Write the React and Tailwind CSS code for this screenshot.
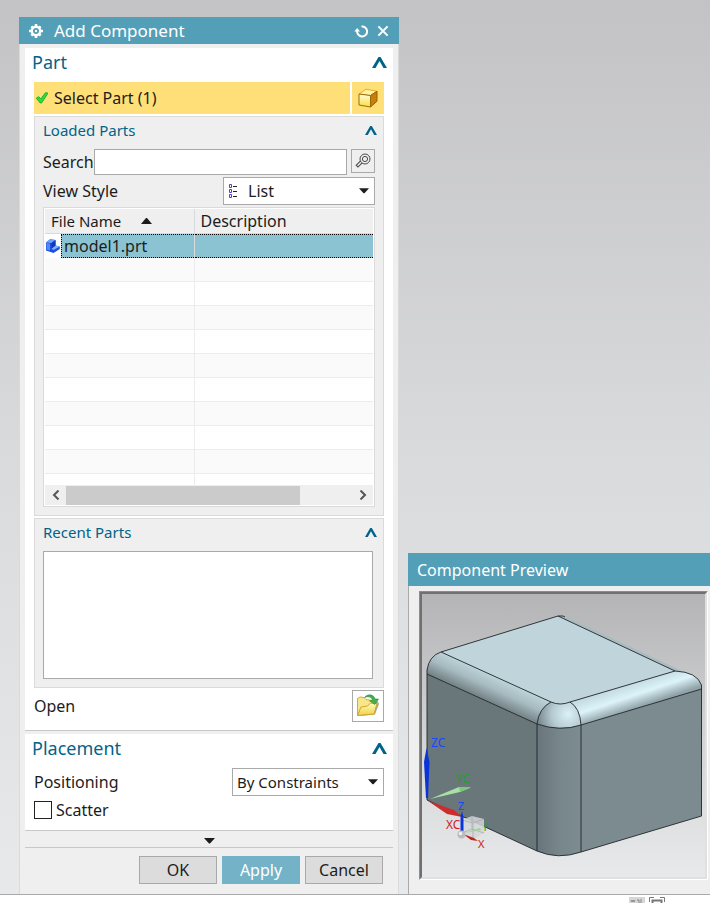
import { useState } from "react";

function Caret({ className }) {
  return (
    <svg className={className} viewBox="0 0 15 11" aria-hidden="true">
      <path d="M0 11 6.500 0h2L15 11H11.500L7.500 4 3.500 11Z" fill="#006487" />
    </svg>
  );
}

function DownArrow({ className }) {
  return (
    <svg className={className} viewBox="0 0 11 6" aria-hidden="true">
      <path d="M0 0h11L6 5.5H5Z" fill="#1c1c1c" />
    </svg>
  );
}

function GearIcon() {
  return (
    <svg className="size-4" viewBox="0 0 16 16" aria-hidden="true">
      <g stroke="#fff" strokeWidth="2.600">
        <path d="M8 1v14M1 8h14M3.400 3.400l9.200 9.200M12.600 3.400l-9.200 9.200" />
      </g>
      <circle cx="8" cy="8" r="4.200" fill="#549fb8" stroke="#fff" strokeWidth="2.400" />
      <circle cx="8" cy="8" r="1.200" fill="#fff" />
    </svg>
  );
}

function CheckIcon() {
  return (
    <svg className="h-3 w-3" viewBox="0 0 12 12" aria-hidden="true">
      <path d="M.3 6.200 2.600 4.600 4.800 6.800 9.600 .6 12 1.200 5.600 11H4.200Z" fill="#2bdc3b" stroke="#12a622" strokeWidth=".8" />
    </svg>
  );
}

function BlockIcon() {
  return (
    <svg className="size-5" viewBox="0 0 20 20" aria-hidden="true">
      <defs>
        <linearGradient id="blockFront" x1="0" y1="0" x2="0" y2="1">
          <stop offset="0" stopColor="#fffde0" />
          <stop offset="1" stopColor="#fbdc3a" />
        </linearGradient>
      </defs>
      <path d="M1 6 8 1.2l11 2L12.500 7.500Z" fill="#fff3a8" stroke="#e8b020" />
      <path d="M12.500 7.500 19 3.200v10L12.500 19Z" fill="#c77f08" stroke="#9a5c05" />
      <path d="M1 6l11.500 1.500V19L1 17Z" fill="url(#blockFront)" stroke="#9a6a0a" />
    </svg>
  );
}

function SearchIcon() {
  return (
    <svg className="size-4" viewBox="0 0 16 16" fill="none" stroke="#4a4a4a" aria-hidden="true">
      <circle cx="10" cy="6" r="5" />
      <circle cx="10" cy="6" r="2.600" />
      <path d="M6.200 9 1.700 13.500" strokeWidth="3.600" />
      <path d="M6 9.200 2.500 12.700" stroke="#efefef" strokeWidth="1.400" />
    </svg>
  );
}

function ListIcon() {
  return (
    <svg className="h-4 w-2" viewBox="0 0 8 16" fill="none" aria-hidden="true">
      <path d="M.5 1.500h2v3h-2zM.5 6.500h2v3h-2zM.5 11.500h2v3h-2z" stroke="#4a3fd0" />
      <path d="M4 3.500h4M4 8.500h4M4 13.500h4" stroke="#222" />
    </svg>
  );
}

function PartIcon() {
  return (
    <svg className="h-4 w-4 shrink-0" viewBox="0 0 16 16" aria-hidden="true">
      <path d="M1 4.500 5 1.200 10.500 2V7.500L14.800 8.500V11L8.500 15 1 12.500Z" fill="#1f4fe0" />
      <path d="M1 4.500 5 1.200 10.500 2 6.500 5Z" fill="#6fa2ff" />
      <path d="M1.500 5 5 5.800V12.500L1.500 11.500Z" fill="#4f8bff" />
      <path d="M6.500 10.500 10.500 7.500l4.300 1L8.500 12Z" fill="#7fb0ff" />
      <path d="M6.500 5 10.500 2V7.500L6.500 10.500Z" fill="#1238b8" />
    </svg>
  );
}

function FolderIcon() {
  return (
    <svg className="size-6" viewBox="0 0 24 24" aria-hidden="true">
      <defs>
        <linearGradient id="folderFront" x1="0" y1="0" x2="0" y2="1">
          <stop offset="0" stopColor="#fffbb8" />
          <stop offset="1" stopColor="#f0d04a" />
        </linearGradient>
      </defs>
      <path d="M4 22 19 20.500 23 10 21.500 7Z" fill="#a9a99c" />
      <path d="M1.500 21.500V4.500L4 3 8 3.500l2 2 9 1.500 1.500 3-3 9Z" fill="#f8e68c" stroke="#d3ad2e" />
      <path d="M1.500 21.500 5 13 11.500 12l3-3 6.500.5L18 20Z" fill="url(#folderFront)" stroke="#cfa62a" />
      <path d="M8.500 3.500C11 0 17.500-.5 19 5H22.500L18.800 10.500 13.500 6.800 16.500 6.200C15.500 2.300 11.500 2.200 8.500 3.500Z" fill="#45b04b" stroke="#2c8e3a" strokeWidth=".6" />
    </svg>
  );
}

function SectionHeading({ children }) {
  return (
    <div className="flex h-7 items-center justify-between pr-[6px] pl-[7px]">
      <h2 className="text-[18px] leading-7 text-[#006487]">{children}</h2>
      <button type="button" aria-label={`Collapse ${children}`}>
        <Caret className="h-[11px] w-[15px]" />
      </button>
    </div>
  );
}

function GroupHeading({ children }) {
  return (
    <div className="flex h-[26px] items-center justify-between pr-[6px] pl-2">
      <h3 className="text-[15px] text-[#006487]">{children}</h3>
      <button type="button" aria-label={`Collapse ${children}`}>
        <Caret className="h-[9px] w-3" />
      </button>
    </div>
  );
}

const emptyRows = [0, 1, 2, 3, 4, 5, 6, 7, 8, 9];

function PartsTable() {
  return (
    <div className="mt-[2px] border border-[#dadada] bg-white p-px">
      <div className="h-[276px] overflow-hidden">
        <table className="w-full table-fixed border-collapse text-left">
          <thead>
            <tr className="h-6 bg-[#efefef]">
              <th className="w-[149px] border-r border-b border-[#dadada] p-0 pl-[6px] text-[15px] font-normal">
                <span className="flex items-center gap-5">
                  File Name
                  <svg className="h-[6px] w-[11px]" viewBox="0 0 11 6" aria-hidden="true">
                    <path d="M0 6h11L6 0H5Z" fill="#1c1c1c" />
                  </svg>
                </span>
              </th>
              <th className="border-b border-[#dadada] p-0 pl-[6px] font-normal">Description</th>
            </tr>
          </thead>
          <tbody>
            <tr className="h-6">
              <td className="border-r border-[#dadada] p-0">
                <span className="flex h-6 items-center">
                  <PartIcon />
                  <span className="flex h-6 flex-1 items-center border-y border-l border-dotted border-black bg-[#8bc3d2] pl-[2px]">
                    model1.prt
                  </span>
                </span>
              </td>
              <td className="p-0">
                <span className="block h-6 border-y border-dotted border-black bg-[#8bc3d2]" />
              </td>
            </tr>
            {emptyRows.map((row) => (
              <tr key={row} className="h-6 odd:bg-white even:bg-[#fafafa]">
                <td className="border-r border-b border-[#ececec] p-0" />
                <td className="border-b border-[#ececec] p-0" />
              </tr>
            ))}
          </tbody>
        </table>
      </div>
      <div className="flex h-5 items-center bg-[#efefef]">
        <button type="button" aria-label="Scroll left" className="flex w-[21px] justify-center">
          <svg className="h-[10px] w-2" viewBox="0 0 8 10" fill="none" aria-hidden="true">
            <path d="M6.500 .5 2 5l4.500 4.500" stroke="#555" strokeWidth="2" />
          </svg>
        </button>
        <div className="h-[19px] flex-1">
          <div className="h-full w-9/11 bg-[#cbcbcb]" />
        </div>
        <button type="button" aria-label="Scroll right" className="flex w-[21px] justify-center">
          <svg className="h-[10px] w-2" viewBox="0 0 8 10" fill="none" aria-hidden="true">
            <path d="M1.500 .5 6 5 1.500 9.500" stroke="#555" strokeWidth="2" />
          </svg>
        </button>
      </div>
    </div>
  );
}

function AddComponentDialog() {
  const [search, setSearch] = useState("");
  const [scatter, setScatter] = useState(false);
  return (
    <section className="w-[380px] shrink-0 border-x border-[#dadada] bg-[#efefef]">
      <header className="-mx-px flex h-[27px] items-center bg-[#549fb8] pr-[10px] pl-[9px] text-white">
        <GearIcon />
        <h1 className="ml-[10px] flex-1 text-[17px]">Add Component</h1>
        <button type="button" aria-label="Reset" className="mr-[9px]">
          <svg className="h-[14px] w-[14px]" viewBox="0 0 14 14" fill="none" aria-hidden="true">
            <path d="M7.500 2.500A5 5 0 1 1 3.200 6.500" stroke="#fff" strokeWidth="2" />
            <path d="M.3 7.500 3.200 4 6 7.500Z" fill="#fff" />
          </svg>
        </button>
        <button type="button" aria-label="Close">
          <svg className="h-3 w-3" viewBox="0 0 13 13" aria-hidden="true">
            <path d="M1.500 1.500l10 10M11.500 1.500l-10 10" stroke="#fff" strokeWidth="2.200" />
          </svg>
        </button>
      </header>

      <div className="px-[5px] pt-1">
        <div className="border-b border-[#c8c8c8] bg-white pb-2">
          <SectionHeading>Part</SectionHeading>
          <div className="mt-[6px] px-[9px]">
            <div className="flex h-8 gap-[2px]">
              <button type="button" className="flex flex-1 items-center gap-[6px] bg-[#ffe078] pl-[2px]">
                <CheckIcon />
                Select Part (1)
              </button>
              <button type="button" aria-label="Pick part" className="flex w-8 items-center justify-center bg-[#ffe078]">
                <BlockIcon />
              </button>
            </div>

            <div className="mt-[2px] border border-[#dadada] bg-[#efefef] pb-2">
              <GroupHeading>Loaded Parts</GroupHeading>
              <div className="mt-[6px] px-2">
                <div className="flex items-start">
                  <label htmlFor="search" className="w-[51px] leading-[26px]">Search</label>
                  <input
                    id="search"
                    value={search}
                    onChange={(e) => setSearch(e.target.value)}
                    className="h-[26px] min-w-0 flex-1 border border-[#a9a9a9] bg-white px-1 outline-none"
                  />
                  <button type="button" aria-label="Find" className="ml-1 flex size-6 items-center justify-center border border-[#a9a9a9]">
                    <SearchIcon />
                  </button>
                </div>
                <div className="mt-[2px] flex items-center justify-between">
                  <label htmlFor="view-style">View Style</label>
                  <div className="relative w-[152px]">
                    <select id="view-style" className="h-7 w-full appearance-none border border-[#a9a9a9] bg-white pl-6 outline-none">
                      <option>List</option>
                    </select>
                    <span className="pointer-events-none absolute inset-y-0 left-[6px] flex items-center">
                      <ListIcon />
                    </span>
                    <span className="pointer-events-none absolute inset-y-0 right-[6px] flex items-center">
                      <DownArrow className="h-[6px] w-[10px]" />
                    </span>
                  </div>
                </div>
                <PartsTable />
              </div>
            </div>

            <div className="mt-[2px] border border-[#dadada] bg-[#efefef] pr-[10px] pb-2">
              <div className="-mr-[10px]">
                <GroupHeading>Recent Parts</GroupHeading>
              </div>
              <div className="mt-[6px] ml-2 h-32 border border-[#a9a9a9] bg-white" />
            </div>

            <div className="mt-[2px] flex items-center justify-between">
              <label htmlFor="open-part">Open</label>
              <button id="open-part" type="button" className="flex size-8 items-center justify-center border border-[#a9a9a9] bg-white">
                <FolderIcon />
              </button>
            </div>
          </div>
        </div>

        <div className="mt-[3px] border-b border-[#c8c8c8] bg-white pb-[11px]">
          <SectionHeading>Placement</SectionHeading>
          <div className="mt-[6px] px-[9px]">
            <div className="flex items-center justify-between">
              <label htmlFor="positioning">Positioning</label>
              <div className="relative w-[152px]">
                <select id="positioning" className="h-7 w-full appearance-none border border-[#a9a9a9] bg-white pl-1 text-[15px] outline-none">
                  <option>By Constraints</option>
                </select>
                <span className="pointer-events-none absolute inset-y-0 right-[6px] flex items-center">
                  <DownArrow className="h-[6px] w-[10px]" />
                </span>
              </div>
            </div>
            <label className="mt-[5px] flex h-[18px] items-center gap-1">
              <input
                type="checkbox"
                checked={scatter}
                onChange={(e) => setScatter(e.target.checked)}
                className="size-[18px] appearance-none border border-[#222] bg-white checked:bg-[#549fb8]"
              />
              Scatter
            </label>
          </div>
        </div>

        <button type="button" aria-label="Show more" className="flex h-[17px] w-full items-center justify-center border-b border-[#c8c8c8] pt-[3px]">
          <DownArrow className="h-[6px] w-[11px]" />
        </button>
        <div className="flex justify-end gap-[5px] pt-2 pr-[10px] pb-[10px]">
          <button type="button" className="h-7 w-[78px] border border-[#a9a9a9] bg-[#dcdcdc]">OK</button>
          <button type="button" className="h-7 w-[78px] bg-[#74b3c7] text-white">Apply</button>
          <button type="button" className="h-7 w-[78px] border border-[#a9a9a9] bg-[#dcdcdc]">Cancel</button>
        </div>
      </div>
    </section>
  );
}

function PreviewModel() {
  return (
    <svg className="block w-full" viewBox="422 594 283 283" role="img" aria-label="Rounded block">
      <defs>
        <linearGradient id="leftEdge" gradientUnits="userSpaceOnUse" x1="496" y1="676" x2="484" y2="702">
          <stop offset="0" stopColor="#bfd5db" />
          <stop offset=".45" stopColor="#a6babf" />
          <stop offset="1" stopColor="#6b787b" />
        </linearGradient>
        <linearGradient id="rightEdge" gradientUnits="userSpaceOnUse" x1="622" y1="686" x2="630" y2="710">
          <stop offset="0" stopColor="#c3dae0" />
          <stop offset=".5" stopColor="#dcf3f9" />
          <stop offset="1" stopColor="#8fa2a7" />
        </linearGradient>
        <radialGradient id="cornerBall" gradientUnits="userSpaceOnUse" cx="568" cy="714" r="32">
          <stop offset="0" stopColor="#daf1f7" />
          <stop offset=".5" stopColor="#b6cbd1" />
          <stop offset="1" stopColor="#72828a" />
        </radialGradient>
        <linearGradient id="cornerSide" x1="0" x2="1">
          <stop offset="0" stopColor="#68757a" />
          <stop offset=".5" stopColor="#77868b" />
          <stop offset="1" stopColor="#7d8c91" />
        </linearGradient>
      </defs>
      <path d="M558 616 565 616 682 671 675 671Z" fill="#a9bcc1" />
      <path d="M558 616 675 671 570 702Q560 706 551 702L441 652Z" fill="#bfd5db" />
      <path d="M441 652 551 702Q539 708 537 724L427 674V670Q429 656 441 652Z" fill="url(#leftEdge)" />
      <path d="M570 702 675 671Q697 672 701.500 685V689L581 725Q580 710 570 702Z" fill="url(#rightEdge)" />
      <path d="M551 702Q560 706 570 702 580 710 581 725 560 731 537 724 539 708 551 702Z" fill="url(#cornerBall)" />
      <path d="M427 674 537 724V851L427 800Z" fill="#69767a" />
      <path d="M537 724Q560 731 581 725V852Q558 860 537 851Z" fill="url(#cornerSide)" />
      <path d="M581 725 701.500 689V816L581 852Z" fill="#7c8b90" />
      <g fill="none" stroke="#202628" strokeWidth=".9">
        <path d="M441 652 558 616H563L565 617M558 616 675 671M441 652 551 702Q560 706 570 702L675 671Q697 672 701.500 685V816L581 852Q558 860 537 851L427 800V670Q429 656 441 652" />
        <path d="M427 674 537 724Q560 732 581 725L701.500 689M551 702Q539 708 537 724V851M570 702Q580 708 581 725V852" />
      </g>
      <path d="M426.500 748 424 762 426 798H428L429.500 762Z" fill="#0a34d8" />
      <path d="M430 799 459 787 471 787.500 460 792Z" fill="#a8e0a5" />
      <path d="M459 787 460 792 471 787.500Z" fill="#79c878" />
      <path d="M428 801 454 810 462 817 447 814Z" fill="#cc2e2e" />
      <g className="text-[12px]">
        <text x="431" y="747" fill="#1747ff">ZC</text>
        <text x="456" y="783" fill="#2c9c2c">YC</text>
        <text x="446" y="829" fill="#cc2222">XC</text>
        <text x="458" y="810" className="text-[11px]" fill="#1747ff">Z</text>
        <text x="482" y="831" className="text-[11px]" fill="#2c9c2c">Y</text>
        <text x="478" y="848" className="text-[11px]" fill="#cc2222">X</text>
      </g>
      <path d="M462 820 472 816 484 819V833L473 839 462 833Z" fill="#d4d6d7" fillOpacity=".85" />
      <path d="M462 820 473 823 484 819M473 823V839M462 833 472 829 484 833M472 816V829" fill="none" stroke="#a9acad" strokeWidth=".8" />
      <path d="M465 833 480 828 481 830Z" fill="#9bd29a" />
      <path d="M462 811 460.500 817V834H463.500V817Z" fill="#0a34d8" />
      <path d="M463 834 474 838 478 841 471 840Z" fill="#c02424" />
      <circle cx="461.500" cy="834.500" r="4" fill="#b9bbbc" />
      <circle cx="460.500" cy="833.500" r="1.800" fill="#eee" />
    </svg>
  );
}

function ComponentPreview() {
  return (
    <section className="min-w-0 flex-1 border-l border-[#a9a9a9] bg-[#efefef]">
      <header className="-ml-px flex h-[33px] items-center bg-[#549fb8] pl-[9px]">
        <h2 className="text-[16px] text-white">Component Preview</h2>
      </header>
      <div className="pt-[5px] pr-[2px] pb-[14px] pl-[10px]">
        <div className="border border-t-[#8c8c8c] border-r-white border-b-white border-l-[#8c8c8c]">
          <div className="border-2 border-t-[#707070] border-r-[#e0e0e0] border-b-[#e0e0e0] border-l-[#707070] bg-linear-to-b from-[#b4b4b6] via-[#d2d3d5] to-[#e7e9eb]">
            <PreviewModel />
          </div>
        </div>
      </div>
    </section>
  );
}

export default function App() {
  return (
    <div className="flex min-h-screen flex-col bg-white font-['Noto_Sans',sans-serif] text-[16px] leading-5 text-[#1c1c1c]">
      <main className="flex flex-1 items-end gap-[9px] bg-linear-to-b from-[#c3c3c5] via-[#d9dadc] to-[#e7e9eb] pt-[17px] pl-[19px]">
        <AddComponentDialog />
        <ComponentPreview />
      </main>
      <footer className="flex h-[9px] items-start justify-end gap-1 overflow-hidden border-t border-[#a9a9a9] pt-[2px] pr-[45px]">
        <svg className="h-[6px] w-4" viewBox="0 0 16 6" aria-hidden="true">
          <path d="M0 0h16v6H0Z" fill="#d6d6d6" />
          <path d="M2 3l1 2 1-2 1 2 1-2M8 3h2v3M12 2v4" fill="none" stroke="#888" />
        </svg>
        <svg className="h-[6px] w-4" viewBox="0 0 16 6" fill="none" stroke="#777" aria-hidden="true">
          <path d="M.5 5V.5H5M11 .5h4.500V5" />
          <path d="M3.500 6V3.500h9V6" strokeWidth="2" />
        </svg>
      </footer>
    </div>
  );
}
